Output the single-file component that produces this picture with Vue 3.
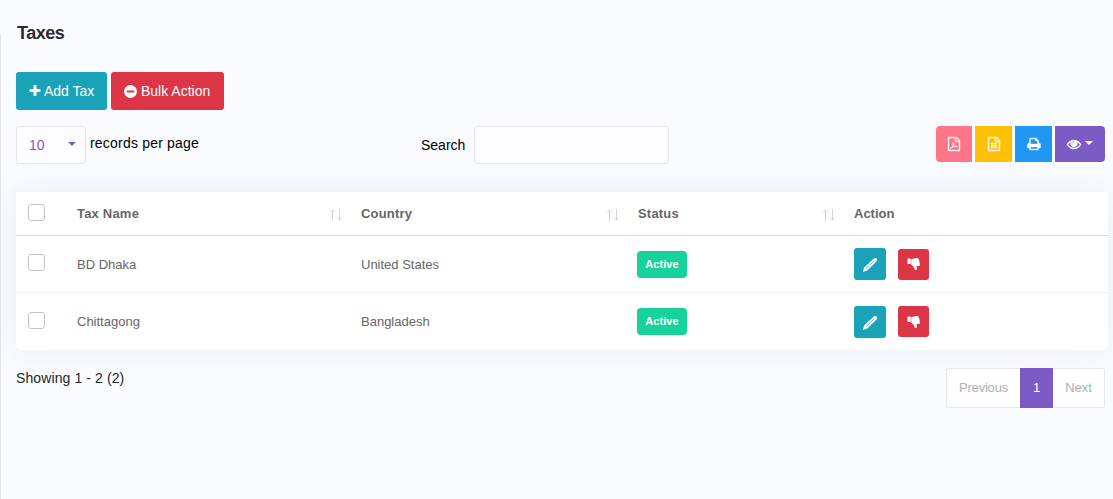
<script setup>
const columns = ['Tax Name', 'Country', 'Status']
const rows = [
  { name: 'BD Dhaka', country: 'United States' },
  { name: 'Chittagong', country: 'Bangladesh' },
]
</script>

<template>
  <div class="page">
    <div class="rail"></div>
    <main>
      <h1>Taxes</h1>
      <div class="buttons">
        <button class="btn teal">
          <svg width="14" height="14" viewBox="0 0 1792 1792"><path d="M1600 736v192q0 40-28 68t-68 28h-416v416q0 40-28 68t-68 28h-192q-40 0-68-28t-28-68v-416h-416q-40 0-68-28t-28-68v-192q0-40 28-68t68-28h416v-416q0-40 28-68t68-28h192q40 0 68 28t28 68v416h416q40 0 68 28t28 68z" /></svg>
          <span>Add Tax</span>
        </button>
        <button class="btn red">
          <svg width="15" height="15" viewBox="0 0 1792 1792"><path d="M1344 960v-128q0-26-19-45t-45-19h-768q-26 0-45 19t-19 45v128q0 26 19 45t45 19h768q26 0 45-19t19-45zm320-64q0 209-103 385.500t-279.500 279.500-385.500 103-385.500-103-279.500-279.500-103-385.500 103-385.500 279.500-279.500 385.500-103 385.500 103 279.500 279.500 103 385.500z" /></svg>
          <span>Bulk Action</span>
        </button>
      </div>

      <div class="toolbar">
        <div class="length">
          <div class="select"><span>10</span><i class="caret"></i></div>
          <span class="label records">records per page</span>
        </div>
        <label class="search"><span class="label">Search</span><input type="text" /></label>
        <div class="exports">
          <button class="pink">
            <svg width="14" height="14" viewBox="0 0 1792 1792"><path d="M1596 380q28 28 48 76t20 88v1152q0 40-28 68t-68 28h-1344q-40 0-68-28t-28-68v-1600q0-40 28-68t68-28h896q40 0 88 20t76 48zm-444-244v376h376q-10-29-22-41l-313-313q-12-12-41-22zm384 1528v-1024h-416q-40 0-68-28t-28-68v-416h-768v1536h1280z" /><path class="line" d="M430 1500C620 1400 850 1050 850 800c0-130-90-100-80 0 30 260 230 430 450 460 160 20 150-90-20-80-270 10-520 80-710 200-90 60-110 120-60 120z" /></svg>
          </button>
          <button class="yellow">
            <svg width="14" height="14" viewBox="0 0 1792 1792"><path d="M1596 380q28 28 48 76t20 88v1152q0 40-28 68t-68 28h-1344q-40 0-68-28t-28-68v-1600q0-40 28-68t68-28h896q40 0 88 20t76 48zm-444-244v376h376q-10-29-22-41l-313-313q-12-12-41-22zm384 1528v-1024h-416q-40 0-68-28t-28-68v-416h-768v1536h1280zM512 768h768v128h-768zM512 1024h768v128h-768zM512 1280h768v128h-768z" /></svg>
          </button>
          <button class="blue">
            <svg width="14" height="14" viewBox="0 0 1792 1792"><path d="M448 1536h896v-256h-896v256zm0-640h896v-384h-160q-40 0-68-28t-28-68v-160h-640v640zm1152 64q0-26-19-45t-45-19-45 19-19 45 19 45 45 19 45-19 19-45zm128 0v416q0 13-9.500 22.500t-22.500 9.500h-224v160q0 40-28 68t-68 28h-960q-40 0-68-28t-28-68v-160h-224q-13 0-22.500-9.500t-9.500-22.500v-416q0-79 56.500-135.500t135.500-56.500h64v-544q0-40 28-68t68-28h672q40 0 88 20t76 48l152 152q28 28 48 76t20 88v256h64q79 0 135.500 56.500t56.500 135.500z" /></svg>
          </button>
          <button class="purple">
            <svg width="14" height="14" viewBox="0 0 1792 1792"><path d="M1664 960q-152-236-381-353 61 104 61 225 0 185-131.500 316.500t-316.500 131.500-316.500-131.500-131.500-316.500q0-121 61-225-229 117-381 353 133 205 333.500 326.500t434.500 121.500 434.500-121.500 333.500-326.500zm-720-384q0-20-14-34t-34-14q-125 0-214.500 89.500t-89.500 214.500q0 20 14 34t34 14 34-14 14-34q0-86 61-147t147-61q20 0 34-14t14-34zm848 384q0 34-20 69-140 230-376.500 368.500t-499.500 138.500-499.500-139-376.500-368q-20-35-20-69t20-69q140-229 376.500-368t499.500-139 499.500 139 376.500 368q20 35 20 69z" /></svg>
            <i class="caret"></i>
          </button>
        </div>
      </div>

      <section class="table">
        <div class="row head">
          <div class="check"><i></i></div>
          <div v-for="c in columns" :key="c" class="cell">
            <span>{{ c }}</span>
            <svg class="sort" width="13" height="12" viewBox="0 0 13 12"><path d="M3.500 12V1M1 3.500L3.500.8 6 3.500M10.500 0v11M8 8.500l2.500 2.700L13 8.500" /></svg>
          </div>
          <div class="cell">Action</div>
        </div>
        <div v-for="r in rows" :key="r.name" class="row body">
          <div class="check"><i></i></div>
          <div class="cell">{{ r.name }}</div>
          <div class="cell">{{ r.country }}</div>
          <div class="cell"><span class="badge">Active</span></div>
          <div class="cell actions">
            <button class="teal edit">
              <svg width="16" height="16" viewBox="0 0 16 16"><path d="M.9 14.900L2 10.800 11.200 1.900Q12.900.3 14.600 1.300 15.900 2.800 14.300 4.700L5.200 13.600z" /><path class="ink" d="M4 11.700L12.200 3.700" /></svg>
            </button>
            <button class="red down">
              <svg width="14" height="14" viewBox="0 0 1792 1792"><path d="M320 576q0 26-19 45t-45 19q-27 0-45.500-19t-18.500-45q0-27 18.500-45.500t45.500-18.500q26 0 45 18.500t19 45.500zm160-448v576q0 26-19 45t-45 19h-288q-26 0-45-19t-19-45v-576q0-26 19-45t45-19h288q26 0 45 19t19 45zm1129 565q55 61 55 149-1 78-57.500 135t-134.500 57h-277q4 14 8 24t11 22 10 18q18 37 27 57t19 58.500 10 76.500q0 24-.5 39t-5 45-12 50-24 45-40 40.500-60 26-82.500 10.500q-26 0-45-19-20-20-34-50t-19.500-52-12.500-61q-9-42-13.500-60.500t-17.500-48.500-31-48q-33-33-101-120-49-64-101-121t-76-59q-25-2-43-20.500t-18-43.500v-641q0-26 19-44.500t45-19.500q35-1 158-44 77-26 120.500-39.500t121.500-29 144-15.500h129q133 2 197 78 58 69 49 181 39 37 54 94 17 61 0 117 46 61 43 137 0 32-15 76z" /></svg>
            </button>
          </div>
        </div>
      </section>

      <footer>
        <span class="info">Showing 1 - 2 (2)</span>
        <nav><a class="prev">Previous</a><a class="current">1</a><a class="next">Next</a></nav>
      </footer>
    </main>
  </div>
</template>

<style>
body { margin: 0; background: #fafbff; }
</style>

<style scoped>
* { box-sizing: border-box; }
.page {
  display: flex;
  height: 499px;
  overflow: hidden;
  background: #fafbff;
  font-family: "Liberation Sans", Arial, sans-serif;
  font-size: 14px;
  color: #212529;
}
.rail { width: 1px; margin-top: 34px; background: #e5e5e7; flex: none; }
main { flex: 1; padding: 22px 5px 0 15px; }
h1 { margin: 0 0 0 1px; font-size: 18px; line-height: 22px; letter-spacing: -.5px; color: #2c2c2f; }
button { border: 0; padding: 0; color: #fff; font: inherit; display: flex; align-items: center; }
svg { fill: currentColor; display: block; flex: none; }
.teal { background: #19a2b8; }
.red { background: #dc3546; }
.buttons { display: flex; gap: 4px; margin-top: 28px; }
.btn { height: 38px; border-radius: 3px; }
.btn.teal { width: 91px; padding-left: 12px; gap: 2px; }
.btn.red { width: 113px; padding-left: 12px; gap: 3px; }
.toolbar { display: flex; height: 38px; margin-top: 16px; }
.length { display: flex; width: 405px; }
.label { color: #000; line-height: 35px; }
.records { letter-spacing: .2px; }
.select {
  display: flex; align-items: center; justify-content: space-between;
  width: 70px; height: 38px; margin-right: 4px; padding: 0 9px 0 12px;
  border: 1px solid #e4e3fa; border-radius: 3px; background: #fdfdff; color: #7c5cc4;
}
.caret { width: 0; height: 0; border: 4px solid transparent; border-top-color: currentColor; border-bottom: 0; }
.select .caret { margin-bottom: 3px; }
.search { display: flex; }
.search .label { width: 53px; line-height: 38px; }
.search input { width: 195px; height: 38px; border: 1px solid #e4e3fa; border-radius: 3px; background: #fdfdff; outline: 0; padding: 0 10px; }
.exports { display: flex; gap: 3px; margin-left: auto; margin-right: 3px; }
.exports button { width: 37px; height: 36px; justify-content: center; }
.exports svg { stroke: currentColor; stroke-width: 45; overflow: visible; }
.exports .pink { width: 36px; background: #ff7588; border-radius: 4px 0 0 4px; }
.exports .yellow { background: #ffc107; }
.exports .blue { background: #2196f3; }
.exports .purple { width: 50px; gap: 4px; background: #7c5cc4; border-radius: 0 4px 4px 0; }
.exports .caret { margin-bottom: 3px; }
.line { fill: none; stroke: currentColor; stroke-width: 110; }
.table {
  margin-top: 28px; height: 158px; border-radius: 0 0 5px 5px; background: #fff;
  color: #666; font-size: 13px; box-shadow: 0 0 35px rgba(100, 105, 130, .09);
}
.row { display: grid; grid-template-columns: 61px 284px 277px 216px 1fr; }
.cell { display: flex; align-items: center; }
.check { padding-left: 12px; }
.check i { display: block; width: 17px; height: 17px; border: 1px solid #c5c5c5; border-radius: 3px; background: #fff; }
.head { height: 44px; border-bottom: 1px solid #dedede; font-weight: 700; }
.head .cell span { letter-spacing: .2px; }
.head .check { padding-top: 12px; }
.head .cell { justify-content: space-between; padding-right: 19px; }
.sort { margin-top: 3px; fill: none; stroke: #d5d4dc; stroke-width: 1; }
.body { height: 56px; }
.body + .body { height: 58px; border-top: 1px solid #f0f0f3; }
.body .check { padding-top: 18px; }
.body + .body .check { padding-top: 19px; }
.badge {
  width: 50px; height: 27px; margin-left: -1px; border-radius: 4px; text-align: center;
  background: #17d39a; color: #fff; font-size: 11px; line-height: 27px; font-weight: 700; letter-spacing: .1px;
}
.actions { gap: 12px; }
.actions button { border-radius: 3px; justify-content: center; }
.edit { width: 32px; height: 32px; }
.down { width: 31px; height: 31px; }
.edit svg { margin-top: 2px; }
.down svg { margin-top: 2px; }
.ink { fill: none; stroke: #19a2b8; stroke-opacity: .75; stroke-width: 1; }
footer { display: flex; justify-content: space-between; margin-top: 18px; padding-right: 3px; line-height: 20px; }
.info { letter-spacing: .1px; }
nav { display: flex; width: 159px; height: 40px; font-size: 13px; line-height: 38px; text-align: center; color: #adb0b6; }
nav a { background: #fefeff; border: 1px solid #e6e7ef; }
.prev { width: 74px; border-right: 0; border-radius: 3px 0 0 3px; letter-spacing: -.2px; }
.current { width: 33px; background: #7c5cc4; border-color: #7c5cc4; color: #fff; }
.next { width: 52px; border-left: 0; border-radius: 0 3px 3px 0; }
</style>
